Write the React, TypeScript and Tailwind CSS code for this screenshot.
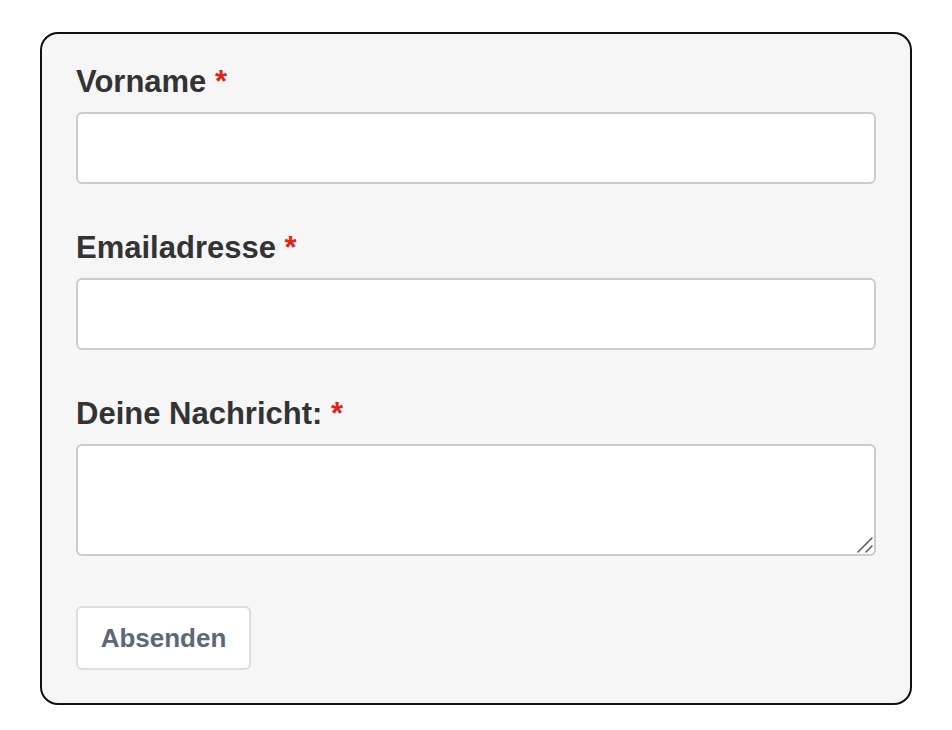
import React, { useState } from "react";

const Label = ( { text, htmlFor }: { text: string; htmlFor: string } ) => (
    <label htmlFor={ htmlFor } className="block text-[31px] leading-[36px] font-bold text-[#333333] mb-3">
        { text } <span className="text-[#e2231a]">*</span>
    </label>
);

const App = () =>
{
    const [ name, setName ] = useState( "" );
    const [ email, setEmail ] = useState( "" );
    const [ message, setMessage ] = useState( "" );

    return (
        <div className="min-h-[730px] bg-white pt-8 px-10" style={ { fontFamily: '"Liberation Sans", Arial, sans-serif' } }>
            <form
                onSubmit={ ( e ) => e.preventDefault() }
                className="w-[872px] border-2 border-[#111111] rounded-[18px] bg-[#f6f6f6] px-[34px] pt-[30px] pb-[33px]"
            >
                <Label text="Vorname" htmlFor="vorname" />
                <input
                    id="vorname"
                    type="text"
                    value={ name }
                    onChange={ ( e ) => setName( e.target.value ) }
                    className="block w-full h-[72px] bg-white border-2 border-[#cccccc] rounded-md px-4 text-[26px] outline-none"
                />

                <div className="mt-[46px]">
                    <Label text="Emailadresse" htmlFor="email" />
                    <input
                        id="email"
                        type="email"
                        value={ email }
                        onChange={ ( e ) => setEmail( e.target.value ) }
                        className="block w-full h-[72px] bg-white border-2 border-[#cccccc] rounded-md px-4 text-[26px] outline-none"
                    />
                </div>

                <div className="mt-[46px]">
                    <Label text="Deine Nachricht:" htmlFor="nachricht" />
                    <div className="relative">
                        <textarea
                            id="nachricht"
                            value={ message }
                            onChange={ ( e ) => setMessage( e.target.value ) }
                            className="block w-full h-[112px] bg-white border-2 border-[#cccccc] rounded-md px-4 py-2 text-[26px] outline-none resize-none"
                        />
                        {/* resize grip */}
                        <svg className="absolute right-[3px] bottom-[3px] pointer-events-none" width="16" height="16" viewBox="0 0 16 16">
                            <line x1="1" y1="15" x2="15" y2="1" stroke="#555555" strokeWidth="1.5" strokeLinecap="round" />
                            <line x1="9" y1="15" x2="15" y2="9" stroke="#555555" strokeWidth="1.5" strokeLinecap="round" />
                        </svg>
                    </div>
                </div>

                <button
                    type="submit"
                    className="mt-[50px] h-16 w-[175px] bg-white border-2 border-[#dddddd] rounded-md text-[26px] font-bold text-[#5c6878]"
                >
                    Absenden
                </button>
            </form>
        </div>
    );
};

export default App;
